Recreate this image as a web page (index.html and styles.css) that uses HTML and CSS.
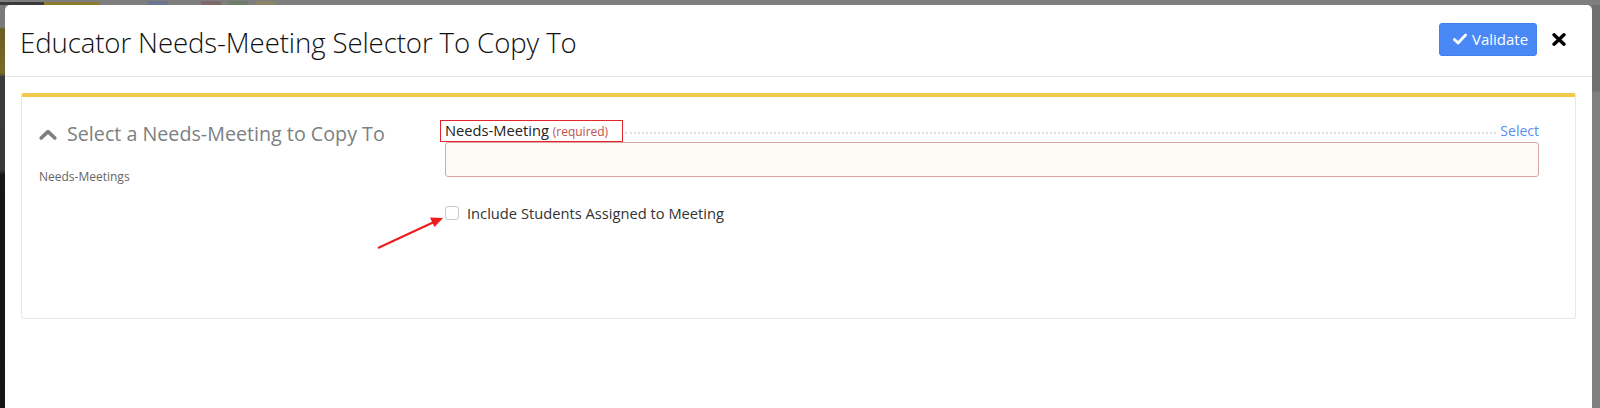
FILE: index.html
```html
<!DOCTYPE html>
<html lang="en">
<head>
<meta charset="utf-8">
<title>Educator Needs-Meeting Selector To Copy To</title>
<link rel="stylesheet" href="styles.css">
</head>
<body>
<div class="topbar">
  <span class="blk blk-logo-a"></span>
  <span class="blk blk-logo-b"></span>
  <span class="blk blk-blue"></span>
  <span class="blk blk-red"></span>
  <span class="blk blk-green"></span>
  <span class="blk blk-yellow"></span>
</div>
<div class="main">
  <div class="left-strip"></div>
  <div class="modal">
    <div class="modal-header">
      <h1 class="modal-title">Educator Needs-Meeting Selector To Copy To</h1>
      <div class="header-actions">
        <button class="btn-validate" type="button">
          <svg class="ico-check" viewBox="0 0 16 14" width="14" height="12"><path d="M1.5 7.5 L5.8 11.6 L14.5 2.4" fill="none" stroke="#fff" stroke-width="3.2" stroke-linecap="round" stroke-linejoin="round"/></svg>
          <span>Validate</span>
        </button>
        <button class="btn-close" type="button" aria-label="Close">
          <svg viewBox="0 0 14 13" width="14" height="13"><path d="M2 1.8 L12 11.2 M12 1.8 L2 11.2" stroke="#000" stroke-width="3.4" stroke-linecap="round"/></svg>
        </button>
      </div>
    </div>
    <div class="modal-body">
      <div class="panel">
        <div class="col-left">
          <h2 class="section-title">
            <svg class="chev" viewBox="0 0 18 11" width="18" height="11"><path d="M2.2 9 L9 2.6 L15.8 9" fill="none" stroke="#7b8182" stroke-width="3.6" stroke-linecap="round" stroke-linejoin="round"/></svg>
            <span>Select a Needs-Meeting to Copy To</span>
          </h2>
          <div class="section-sub">Needs-Meetings</div>
        </div>
        <div class="col-right">
          <div class="field-row">
            <span class="field-label">Needs-Meeting <small class="req">(required)</small></span>
            <span class="dots"></span>
            <a class="select-link" href="#">Select</a>
          </div>
          <div class="field-input"></div>
          <label class="check-row">
            <span class="checkbox"></span>
            <span>Include Students Assigned to Meeting</span>
          </label>
          <svg class="annot-arrow" viewBox="0 0 80 40" width="80" height="40"><line x1="2" y1="38" x2="58" y2="12" stroke="#ee1b1b" stroke-width="2"/><path d="M67 8 L54 7.5 L58.5 17 Z" fill="#ee1b1b"/></svg>
        </div>
      </div>
    </div>
  </div>
  <div class="right-strip"></div>
</div>
</body>
</html>
```
FILE: styles.css
```css
* { box-sizing: border-box; }
html, body { margin: 0; padding: 0; }
body {
  width: 1600px;
  height: 408px;
  overflow: hidden;
  background: #808080;
  font-family: "Open Sans", "Liberation Sans", sans-serif;
  display: flex;
  flex-direction: column;
}
.topbar {
  height: 5px;
  display: flex;
  align-items: flex-end;
  background: #7e7e7e;
  overflow: hidden;
  flex: none;
}
.blk { height: 4px; width: 20px; flex: none; }
.blk-logo-a { width: 44px; background: #3a3a3a; height: 3px; }
.blk-logo-b { width: 56px; background: #8a7a32; height: 3px; margin-left: 0; }
.blk-blue { background: #6c7590; margin-left: 48px; }
.blk-red { background: #7f6868; margin-left: 33px; }
.blk-green { background: #6e7c6a; margin-left: 7px; }
.blk-yellow { background: #8a8468; margin-left: 7px; }

.main { flex: 1; display: flex; }
.left-strip {
  width: 5px;
  flex: none;
  background: linear-gradient(#7a7a7a 0, #7a7a7a 22px, #6a5c22 24px, #7a6a28 68px, #3c3c3c 72px, #383838 165px, #161616 170px, #141414 100%);
}
.right-strip {
  width: 8px;
  flex: none;
  background: linear-gradient(#707070 0, #707070 85px, #808080 88px, #808080 100%);
}
.modal {
  flex: 1;
  background: #fff;
  border-radius: 5px 5px 0 0;
}
.modal-header {
  height: 72px;
  border-bottom: 1px solid #e6e6e6;
  display: flex;
  align-items: center;
  justify-content: space-between;
  padding: 0 26px 0 15px;
}
.modal-title {
  margin: 0;
  font-size: 27.6px;
  font-weight: 300;
  color: #111;
  letter-spacing: -0.1px;
  line-height: 38px;
  padding-top: 2px;
}
.header-actions {
  display: flex;
  align-items: center;
  gap: 15px;
  margin-top: -3px;
}
.btn-validate {
  display: flex;
  align-items: center;
  gap: 5px;
  height: 33px;
  width: 98px;
  padding: 0 0 0 13px;
  background: #4a88f5;
  border: 1px solid #4380ee;
  border-radius: 3px;
  color: #fff;
  font-family: "Open Sans", "Liberation Sans", sans-serif;
  font-size: 15px;
}
.btn-close {
  border: 0;
  background: none;
  padding: 0;
  width: 14px;
  height: 13px;
  display: flex;
}
.modal-body { padding: 16px; }
.panel {
  height: 226px;
  border: 1px solid #e8e8e8;
  border-top: 4px solid #f2c94c;
  border-radius: 3px;
  display: flex;
  padding: 23px 36px 0 17px;
}
.col-left { width: 406px; flex: none; }
.section-title {
  margin: 0;
  display: flex;
  align-items: center;
  gap: 10px;
  font-size: 19.7px;
  font-weight: 400;
  line-height: 28px;
  color: #7b8182;
}
.chev { margin-top: 1px; }
.section-sub {
  margin-top: 20px;
  font-size: 12px;
  line-height: 17px;
  color: #666;
}
.col-right { flex: 1; position: relative; }
.field-row { display: flex; align-items: flex-start; height: 22px; }
.field-label {
  margin-left: -5px;
  border: 1.5px solid #e3262b;
  padding: 0 14px 0 4px;
  font-size: 14.7px;
  line-height: 19px;
  color: #222;
  white-space: nowrap;
}
.req { font-size: 12px; color: #c0504d; }
.dots {
  flex: 1;
  height: 14px;
  border-bottom: 2px dotted #dcdcdc;
  margin: 0 4px 0 2px;
}
.select-link {
  font-size: 14px;
  line-height: 22px;
  color: #5b8def;
  text-decoration: none;
}
.field-input {
  height: 35px;
  border: 1px solid #dba3a3;
  border-radius: 3px;
  background: #fdfbf6;
}
.check-row {
  margin-top: 29px;
  display: flex;
  align-items: center;
  gap: 8px;
  font-size: 14.7px;
  line-height: 14px;
  color: #333;
}
.checkbox {
  width: 14px;
  height: 14px;
  border: 1px solid #c6c9d2;
  border-radius: 3px;
  background: #fff;
}
.annot-arrow {
  position: absolute;
  left: -69px;
  top: 90px;
}
```
